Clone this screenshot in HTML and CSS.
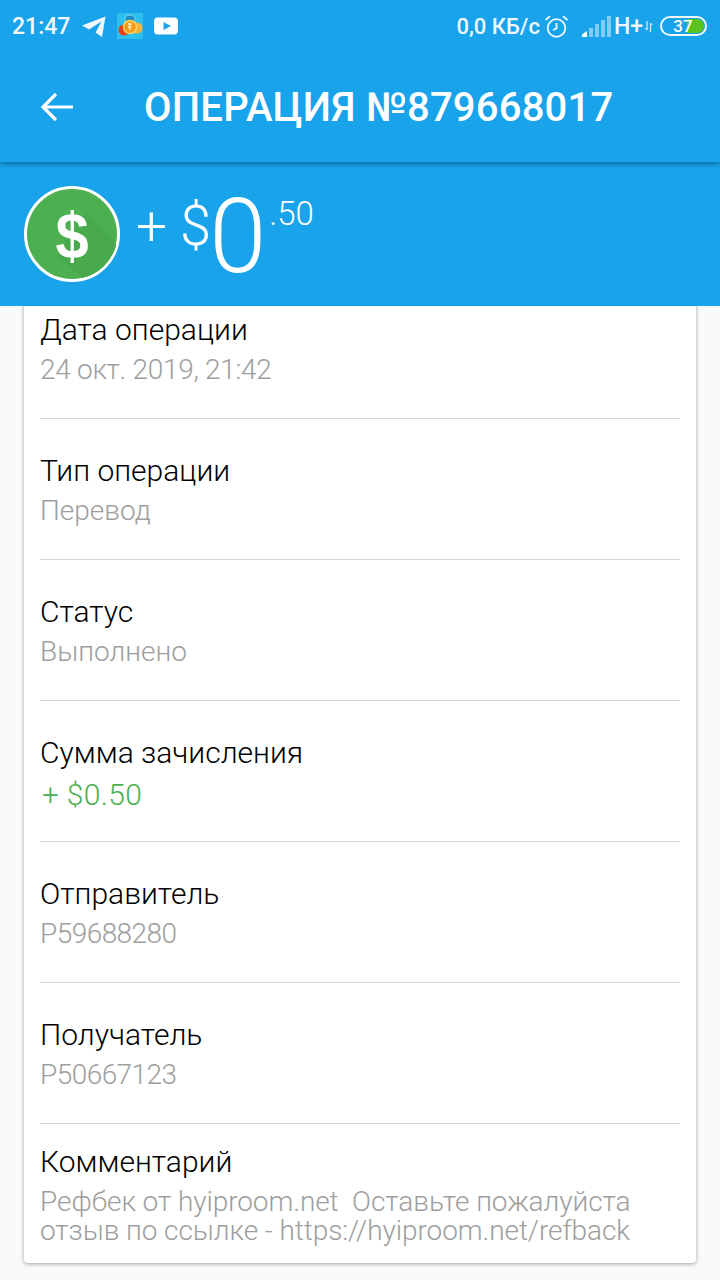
FILE: index.html
```html
<!DOCTYPE html>
<html lang="ru">
<head>
<meta charset="utf-8">
<title>Операция №879668017</title>
<link rel="stylesheet" href="styles.css">
</head>
<body>
<header class="head">
  <div class="status">
    <div class="status-left">
      <span class="time">21:47</span>
      <svg class="ic-tg" width="26" height="24" viewBox="0 0 26 24"><path fill="#f0f8fe" d="M1 11.500 24.500 2.500 21 23 14.500 18.500 20.500 7.500 8 15.500Z"/></svg>
      <svg class="ic-app" width="26" height="26" viewBox="0 0 26 26"><rect width="26" height="26" fill="#2cc0ee"/><path d="M8 12V6a5 4 0 0 1 10 0v6" fill="#1d8fc8" stroke="#7fd8f0" stroke-width="1"/><circle cx="7" cy="17" r="5.500" fill="#e53f1e"/><circle cx="20" cy="15" r="5.500" fill="#f4b23a"/><circle cx="13" cy="14" r="6.500" fill="#f59a1c" stroke="#fbd45a" stroke-width="1.500"/><path d="M11 11h4M13 11v6M11 14h3" stroke="#fff3c0" stroke-width="1.300" fill="none"/></svg>
      <svg class="ic-yt" width="24" height="18" viewBox="0 0 24 18"><rect width="24" height="17" y=".5" rx="4" fill="#fff"/><path fill="#18a3eb" d="M9.500 5 17 9l-7.500 4Z"/></svg>
    </div>
    <div class="status-right">
      <span class="speed">0,0 КБ/с</span>
      <svg class="ic-alarm" width="25" height="25" viewBox="0 0 25 25" fill="none" stroke="#f0f8fe" stroke-width="1.800"><circle cx="12.500" cy="14" r="8.800"/><path d="M12.500 9v5.500l-3.500 1.500M1.500 6 6 2.300M23.500 6 19 2.300"/></svg>
      <svg class="ic-signal" width="30" height="21" viewBox="0 0 30 21"><path fill="#fff" d="M1 21v-2.500l5-3.500v6Z"/><g fill="#fff" fill-opacity=".45"><rect x="8" y="12" width="4" height="9"/><rect x="14" y="8" width="4" height="13"/><rect x="20" y="4" width="4" height="17"/><rect x="26" y="0" width="4" height="21"/></g></svg>
      <span class="net">H+</span>
      <svg class="ic-arrows" width="8" height="12" viewBox="0 0 8 12" fill="none" stroke="#d8eefb" stroke-width="1.200"><path d="M2 1v9M5.500 3v9M.5 8 2 10M7 5 5.500 3"/></svg>
      <span class="battery"><span class="battery-fill"></span><span class="battery-num">37</span></span>
    </div>
  </div>
  <div class="toolbar">
    <svg class="ic-back" width="34" height="30" viewBox="0 0 34 30" fill="none" stroke="#fff" stroke-width="3.200"><path d="M33 15H3M16 2 3 15l13 13"/></svg>
    <h1 class="title">ОПЕРАЦИЯ №879668017</h1>
  </div>
</header>
<section class="summary">
  <svg class="coin" width="96" height="96" viewBox="0 0 96 96"><circle cx="48" cy="48" r="46.500" fill="#4caf50" stroke="#fff" stroke-width="3"/><path fill="#49a94d" d="M62 26 88 52 92 60 A46 46 0 0 1 58 92L32 68 48 48Z"/><text class="coin-sign" transform="translate(48 71.500) scale(.92 1)" text-anchor="middle">$</text></svg>
  <div class="amount">
    <span class="plus">+</span>
    <span class="cur">$</span>
    <span class="int">0</span>
    <span class="dec">.50</span>
  </div>
</section>
<main class="content">
  <div class="card">
    <div class="row"><div class="name">Дата операции</div><div class="val val-date">24 окт. 2019, 21:42</div></div>
    <div class="row"><div class="name">Тип операции</div><div class="val">Перевод</div></div>
    <div class="row"><div class="name">Статус</div><div class="val">Выполнено</div></div>
    <div class="row"><div class="name">Сумма зачисления</div><div class="val val-green">+ $0.50</div></div>
    <div class="row"><div class="name">Отправитель</div><div class="val val-id">P59688280</div></div>
    <div class="row"><div class="name">Получатель</div><div class="val val-id">P50667123</div></div>
    <div class="row row-last"><div class="name">Комментарий</div><div class="val val-multi">Рефбек от hyiproom.net&nbsp; Оставьте пожалуйста<br>отзыв по ссылке - https://hyiproom.net/refback</div></div>
  </div>
</main>
</body>
</html>
```
FILE: styles.css
```css
* { box-sizing: border-box; }
html, body { margin: 0; padding: 0; }
body {
  width: 720px;
  height: 1280px;
  overflow: hidden;
  background: #fafafa;
  font-family: Roboto, "Noto Sans", sans-serif;
  display: flex;
  flex-direction: column;
}
.head {
  height: 162px;
  background: #18a3eb;
  box-shadow: 0 2px 5px rgba(0,0,0,.35);
  position: relative;
  z-index: 2;
  flex: none;
}
.status {
  height: 52px;
  padding: 0 13px 0 12px;
  display: flex;
  justify-content: space-between;
  align-items: center;
  color: #f0f8fe;
  font-weight: 500;
}
.status-left, .status-right { display: flex; align-items: center; }
.time { font-size: 23px; margin-right: 11px; }
.ic-tg { margin-right: 10px; }
.ic-app { margin-right: 11px; }
.speed { font-size: 22px; margin-right: 4px; }
.ic-alarm { margin-right: 12px; }
.ic-signal { margin-right: 3px; }
.net { font-size: 23px; margin-right: 2px; }
.ic-arrows { margin-right: 7px; }
.battery {
  width: 47px;
  height: 20px;
  border: 2px solid #f0f8fe;
  border-radius: 10px;
  position: relative;
  overflow: hidden;
  display: flex;
  align-items: center;
  justify-content: center;
}
.battery-fill { position: absolute; top: 1px; bottom: 1px; right: 1px; width: 17px; background: #5ac31e; border-radius: 1px 8px 8px 1px; }
.battery-num { position: relative; font-size: 17px; color: #fff; margin-right: 1px; }
.toolbar {
  height: 110px;
  display: flex;
  align-items: center;
  padding: 0 0 0 40px;
}
.ic-back { flex: none; }
.title {
  margin: 0 0 0 70px;
  font-size: 40px;
  font-weight: 500;
  letter-spacing: .2px;
  color: #fff;
  white-space: nowrap;
}
.summary {
  height: 144px;
  flex: none;
  background: #18a3eb;
  display: flex;
  align-items: flex-start;
  padding: 24px 0 0 24px;
  color: #fff;
}
.coin { flex: none; }
.coin-sign { font-family: "Liberation Sans", sans-serif; font-weight: 700; font-size: 65px; fill: #fff; }
.amount { display: flex; align-items: flex-start; font-weight: 300; margin-left: 16px; }
.plus { font-size: 55px; line-height: 60px; margin-top: 10px; }
.cur { font-size: 56px; line-height: 64px; margin: 8px 0 0 13px; }
.int { font-size: 103px; line-height: 110px; margin: -4px 0 0 -2px; }
.dec { font-size: 33px; line-height: 40px; margin: 8px 0 0 3px; }
.content {
  flex: 1;
  min-height: 0;
  overflow: hidden;
  padding: 0 24px;
}
.card {
  margin-top: -28px;
  background: #fff;
  border-radius: 4px;
  box-shadow: 0 1px 4px rgba(0,0,0,.35);
  padding: 0 16px;
  height: 985px;
}
.row {
  height: 141px;
  border-bottom: 1px solid #d6d6d6;
  padding-top: 34px;
}
.row-last { border-bottom: 0; padding-top: 20px; }
.name { font-size: 30px; font-weight: 300; color: #000; line-height: 36px; }
.val { font-size: 28px; font-weight: 300; color: #9e9e9e; line-height: 36px; margin-top: 4px; }
.val-date { letter-spacing: -.3px; }
.val-id { letter-spacing: -.55px; }
.val-green { color: #4caf50; font-size: 30px; margin: 6px 0 0 2px; letter-spacing: .3px; }
.val-multi { line-height: 29px; margin-top: 7px; white-space: nowrap; letter-spacing: -.07px; }
```
